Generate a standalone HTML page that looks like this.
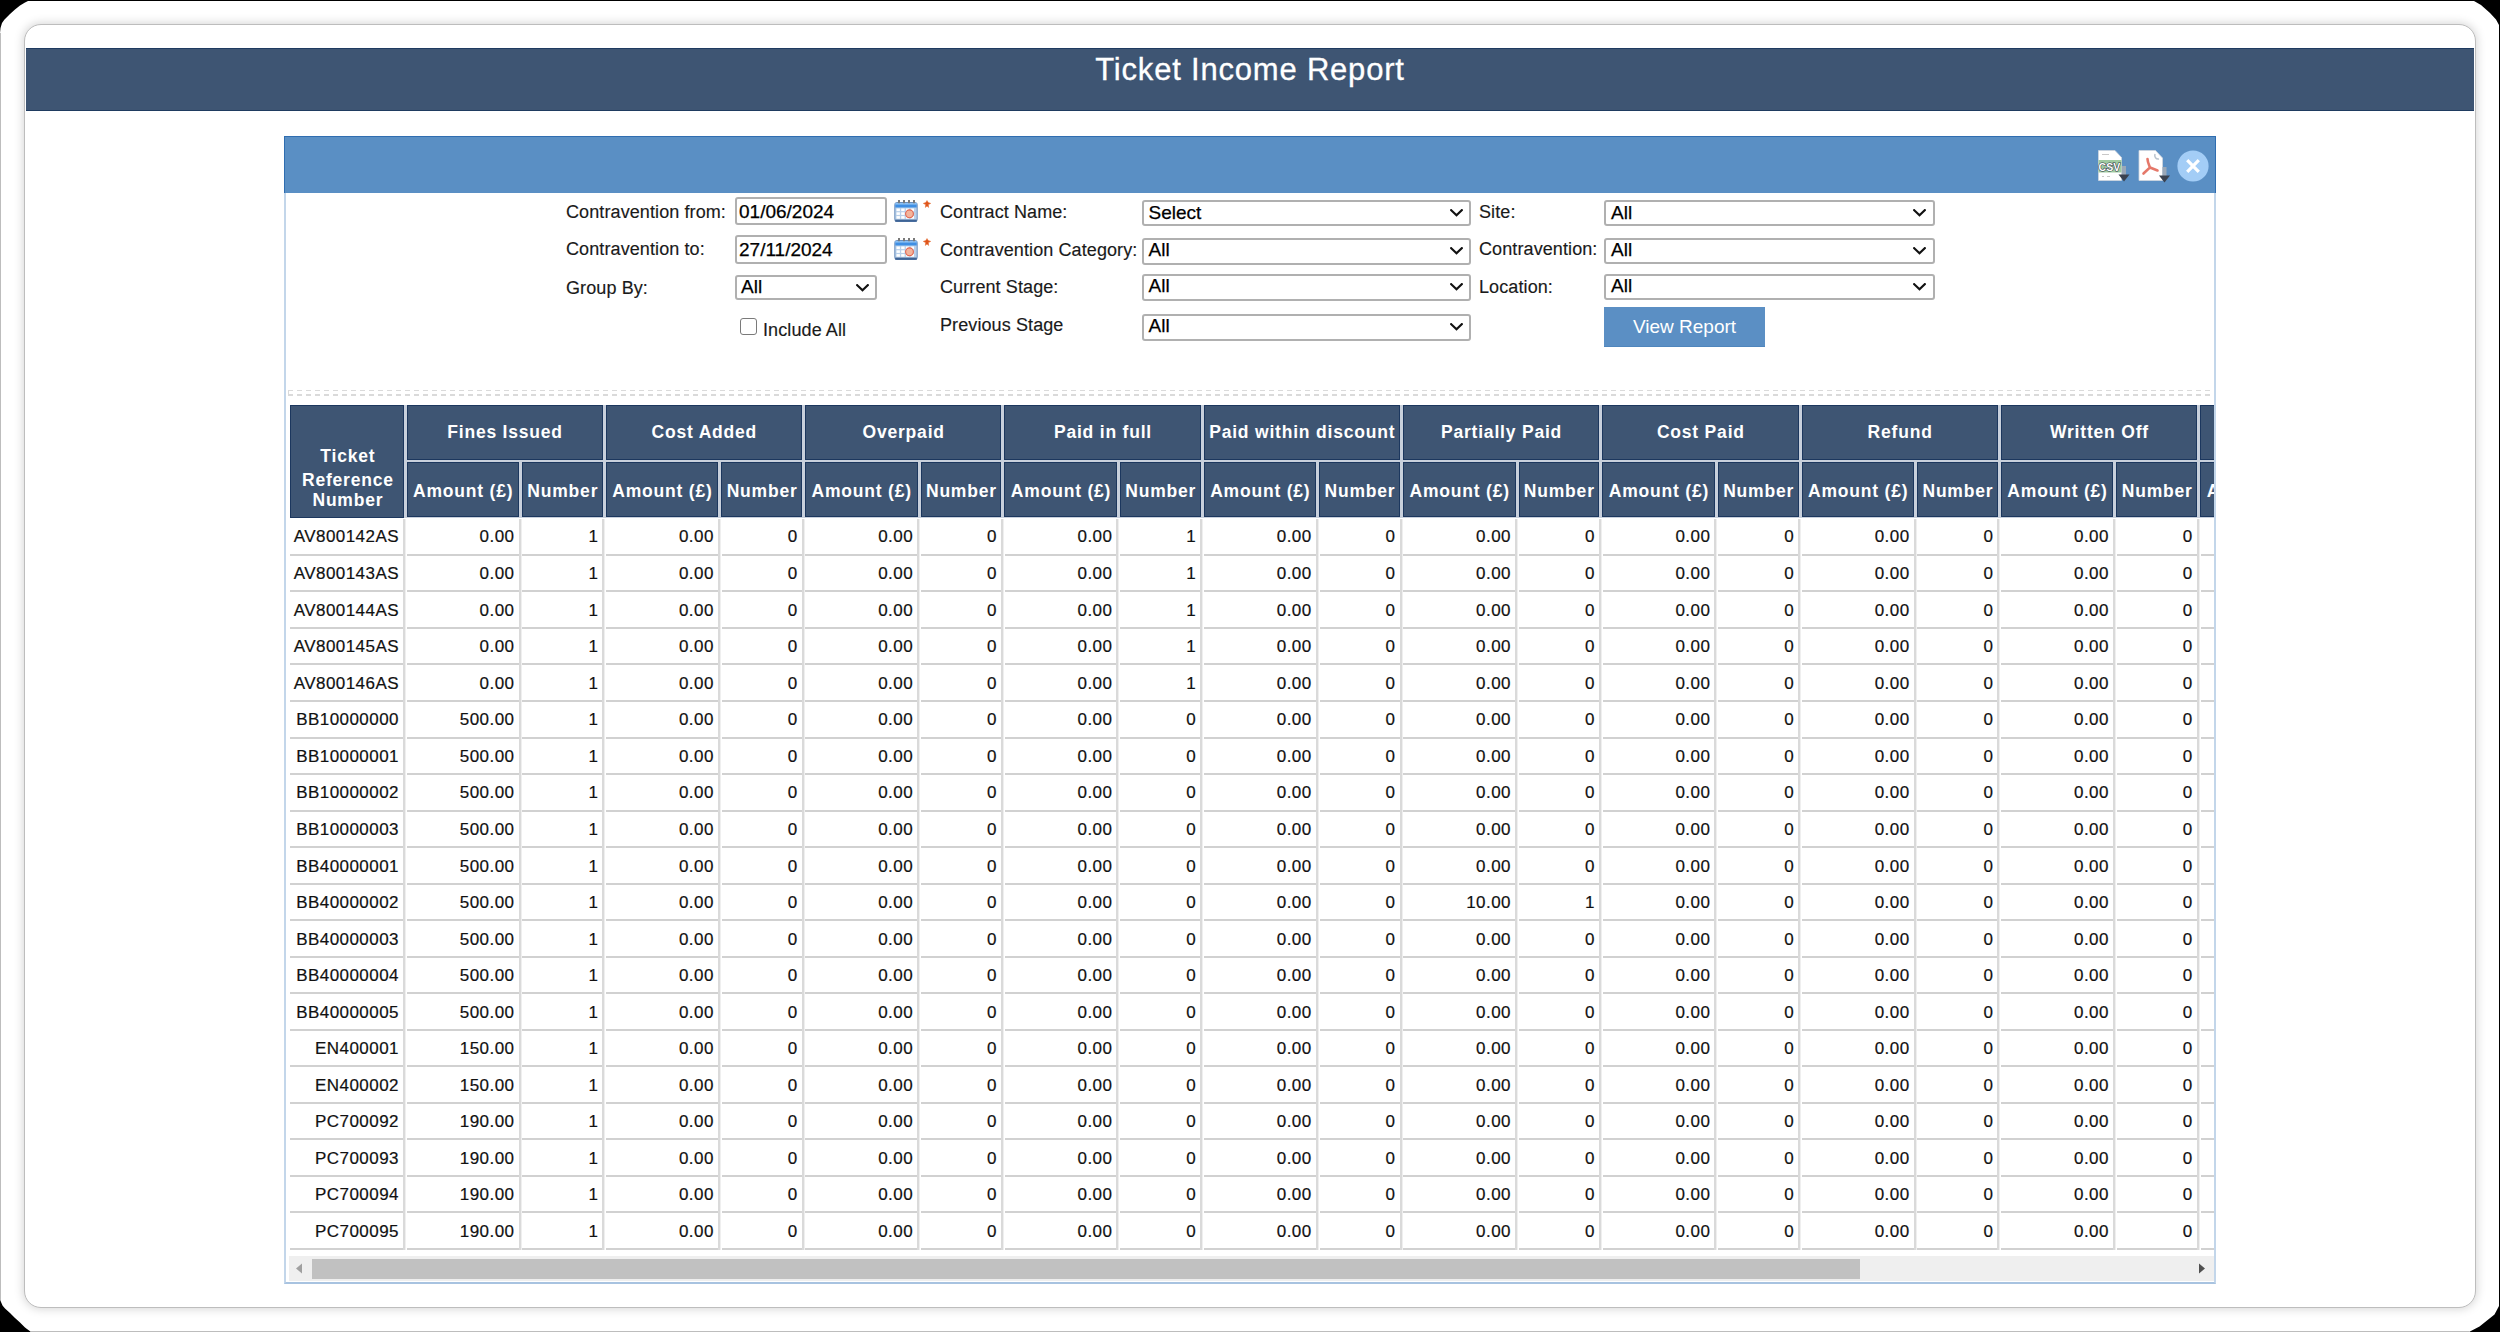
<!DOCTYPE html>
<html>
<head>
<meta charset="utf-8">
<style>

*{box-sizing:border-box;margin:0;padding:0}
html,body{width:2500px;height:1332px;overflow:hidden;background:#000}
body{font-family:"Liberation Sans",sans-serif;position:relative}
.outer{position:absolute;left:0;top:0;width:2500px;height:1332px;background:#fff;clip-path:polygon(0px 33px,0.5px 28px,2px 23px,4.5px 19.5px,10px 14px,15px 9.5px,20px 5.5px,25px 2.5px,28px 1px,2474px 1px,2481px 5px,2490px 13px,2496px 19.5px,2499px 25px,2499px 1306px,2494.5px 1314.5px,2487px 1320.5px,2479.5px 1326.5px,2469px 1332px,31px 1332px,25px 1327.5px,20px 1322.5px,15px 1318px,10px 1313px,5px 1308.5px,2.5px 1305.5px,1px 1302px,0px 1299.5px)}
.gl{position:absolute;left:0;top:33px;width:1px;height:1267px;background:#bdbdbd}
.gb{position:absolute;left:31px;top:1331px;width:2438px;height:1px;background:#bdbdbd}
.card{position:absolute;left:23.8px;top:23.6px;width:2452.6px;height:1284.6px;background:#fff;border:1.6px solid #bdbdbd;border-radius:17px;box-shadow:0 0 10px 1px rgba(0,0,0,0.17)}
.topbar{position:absolute;left:26px;top:48px;width:2448px;height:63px;background:#3e5573;border-top:1.5px solid #1f3b60;border-bottom:1.5px solid #1f3b60}
.title{position:absolute;left:0;top:0;width:100%;text-align:center;color:#fff;font-size:31px;line-height:42px;letter-spacing:0.8px;-webkit-text-stroke:0.3px #fff}
.panel{position:absolute;left:284px;top:136px;width:1932px;height:1148px;border:2px solid #c3d6ea;border-bottom-color:#a8c3e0;border-top:none;background:#fff;overflow:hidden}
.phead{position:absolute;left:284px;top:136px;width:1932px;height:57px;background:#5a8fc4;border-top:1.5px solid #2f6db0;border-right:1.5px solid #2f6db0;border-left:1.2px solid #2f6db0}
.lbl{position:absolute;font-size:18px;color:#111;white-space:nowrap;line-height:20px}
.inp{position:absolute;border:2px solid #8a8a8a;border-radius:3px;background:#fff;font-size:19px;color:#000;line-height:22px;padding-left:4px;white-space:nowrap}
.sel{position:absolute;border:2px solid #7d7d7d;border-radius:3px;background:#fff;font-size:19px;color:#000;line-height:22px;padding-left:5px;white-space:nowrap}
.sel svg{position:absolute;right:7px;top:8px}

.lbl{position:absolute;font-size:18px;color:#1a1a1a;white-space:nowrap;line-height:20px;letter-spacing:0.1px;-webkit-text-stroke:0.15px #1a1a1a}
.box{position:absolute;border:2px solid #b0b0b0;border-radius:3px;background:#fff;font-size:19px;color:#000;white-space:nowrap;overflow:hidden}
.box span{position:absolute;left:0;top:0;line-height:20px;-webkit-text-stroke:0.25px #000}
.chev{position:absolute;width:13px;height:8px}
.btn{position:absolute;left:1604px;top:307px;width:161px;height:40px;background:#5b8fc4;color:#fff;font-size:19px;text-align:center;line-height:40px;border-bottom:1px solid #4f86bd}
.cb{position:absolute;left:740px;top:318px;width:17px;height:17px;border:1.5px solid #7a7a7a;border-radius:3px;background:#fff}
.cal{position:absolute;width:24px;height:22px}
.ast{position:absolute;width:8px;height:8px}
.dash{position:absolute;left:288px;top:390.2px;width:1926px;height:5.6px;background:repeating-linear-gradient(90deg,#dadada 0,#dadada 5px,transparent 5px,transparent 9px);-webkit-mask:linear-gradient(180deg,#000 0,#000 1.4px,transparent 1.4px,transparent 4.2px,#000 4.2px,#000 5.6px)}
.dashl{position:absolute;left:288px;top:390.2px;width:1.4px;height:5.6px;background:#dadada}


.tclip{position:absolute;left:288px;top:400px;width:1926px;height:855px;overflow:hidden}
.hbg{position:absolute;background:#c8d0dc}
.hc{position:absolute;background:#3e5573;border:1.3px solid #1c375e}
.ht{position:absolute;width:300px;text-align:center;color:#fff;font-weight:bold;font-size:17.5px;line-height:22px;white-space:nowrap;letter-spacing:0.8px;text-indent:0.8px}
.hl{position:absolute;height:2px;background:#d1d1d1}
.vl{position:absolute;width:3px;background:linear-gradient(90deg,#dadada 0,#dadada 55%,#efefef 55%)}
.bt{position:absolute;width:200px;text-align:right;color:#111;font-size:17px;line-height:20px;white-space:nowrap;letter-spacing:0.45px;-webkit-text-stroke:0.2px #111}
.sbar{position:absolute;left:289px;top:1256px;width:1925px;height:25px;background:#efefef}
.sthumb{position:absolute;left:23px;top:2.5px;width:1548px;height:20.5px;background:#c1c1c1}

</style>
</head>
<body>
<div class="outer"></div><div class="gl"></div><div class="gb"></div>
<div class="card"></div>
<div class="topbar"><div class="title" style="top:0.4px">Ticket Income Report</div></div>
<div class="panel"></div>
<div class="phead"></div>
<svg style="position:absolute;left:2094px;top:146px" width="40" height="40" viewBox="0 0 40 40">
<path d="M4.5 4.5 H21 L27.5 11.5 V34.5 H4.5Z" fill="#fff" stroke="#cfd6de" stroke-width="0.8"/>
<path d="M8 8.5 H15 M8 30.5 H10 M13 30.5 H16" stroke="#c8c8c8" stroke-width="1.2"/>
<rect x="4.5" y="14" width="23" height="12.5" fill="#9fcaa0"/>
<text x="4.6" y="24.6" font-family="Liberation Sans" font-weight="bold" font-size="10.5" fill="#fff" stroke="#2a3344" stroke-width="1.1" paint-order="stroke">CSV</text>
<path d="M30 20 V33" stroke="#9aa8b8" stroke-width="4"/>
<path d="M24.5 28.5 L30 35.5 L35.5 28.5Z" fill="#3a4250"/>
</svg>
<svg style="position:absolute;left:2134px;top:146px" width="40" height="40" viewBox="0 0 40 40">
<path d="M5 4.5 H21.5 L28.5 12 V34.5 H5Z" fill="#fff" stroke="#cfd6de" stroke-width="0.8"/>
<path d="M21 8 C20 11 22 13.5 25 13" stroke="#b8c2cc" stroke-width="1.5" fill="none"/>
<path d="M13.5 13 C13.5 16 15 19 16 21.5 L9.5 27.5 M16 21.5 L23.5 24.5" stroke="#e5786a" stroke-width="2.6" fill="none" stroke-linecap="round"/>
<path d="M30.5 21 V34" stroke="#9aa8b8" stroke-width="4"/>
<path d="M25 29.5 L30.5 36.5 L36 29.5Z" fill="#3a4250"/>
</svg>
<svg style="position:absolute;left:2177px;top:150px" width="32" height="32" viewBox="0 0 32 32">
<circle cx="16" cy="16" r="15.6" fill="#a3cdf6"/>
<path d="M10.2 10.2 L21.8 21.8 M21.8 10.2 L10.2 21.8" stroke="#fff" stroke-width="3.2" stroke-linecap="butt"/>
</svg>
<div class="dash"></div><div class="dashl"></div><div class="lbl" style="left:566px;top:201.56px;">Contravention from:</div><div class="lbl" style="left:566px;top:239.36px;">Contravention to:</div><div class="lbl" style="left:566px;top:277.76px;">Group By:</div><div class="lbl" style="left:763px;top:320.26px;">Include All</div><div class="box" style="left:735px;top:197px;width:152px;height:28px"><span style="left:2px;top:3.02px">01/06/2024</span></div><div class="box" style="left:735px;top:235px;width:152px;height:29px"><span style="left:2px;top:3.02px">27/11/2024</span></div><div class="box" style="left:735px;top:275px;width:142px;height:25px"><span style="left:4px;top:-0.18px">All</span><svg class="chev" style="left:118.5px;top:6.5px" viewBox="0 0 13 8"><path d="M1.2 1.2 L6.5 6.3 L11.8 1.2" fill="none" stroke="#111" stroke-width="2.2" stroke-linecap="square"/></svg></div><div class="cb"></div><svg class="cal" style="left:894px;top:200px" viewBox="0 0 24 22">
<rect x="0.8" y="2.5" width="22.4" height="19" rx="2" fill="#b9d0ea" stroke="#6a8fbd" stroke-width="1"/>
<rect x="1.3" y="3" width="21.4" height="4.5" fill="#3f8fe4"/>
<rect x="1.3" y="3" width="21.4" height="1.6" fill="#8cc0f2"/>
<g fill="#7a7a7a"><rect x="4" y="0" width="2" height="3.2"/><rect x="9" y="0" width="2" height="3.2"/><rect x="14" y="0" width="2" height="3.2"/><rect x="19" y="0" width="2" height="3.2"/></g>
<g fill="#ffffff"><rect x="2.5" y="8.5" width="3.4" height="2.6"/><rect x="7.2" y="8.5" width="3.4" height="2.6"/><rect x="11.9" y="8.5" width="3.4" height="2.6"/><rect x="16.6" y="8.5" width="3.4" height="2.6"/>
<rect x="2.5" y="12.3" width="3.4" height="2.6"/><rect x="7.2" y="12.3" width="3.4" height="2.6"/><rect x="2.5" y="16.1" width="3.4" height="2.6"/><rect x="7.2" y="16.1" width="3.4" height="2.6"/><rect x="11.9" y="16.1" width="3.4" height="2.6"/><rect x="16.6" y="16.1" width="3.4" height="2.6"/></g>
<circle cx="15.5" cy="13.8" r="3.9" fill="#f3b49c" stroke="#e2654e" stroke-width="1.1"/>
<rect x="1.2" y="19.6" width="21.6" height="2.2" fill="#3f6496"/>
</svg><svg class="cal" style="left:894px;top:238px" viewBox="0 0 24 22">
<rect x="0.8" y="2.5" width="22.4" height="19" rx="2" fill="#b9d0ea" stroke="#6a8fbd" stroke-width="1"/>
<rect x="1.3" y="3" width="21.4" height="4.5" fill="#3f8fe4"/>
<rect x="1.3" y="3" width="21.4" height="1.6" fill="#8cc0f2"/>
<g fill="#7a7a7a"><rect x="4" y="0" width="2" height="3.2"/><rect x="9" y="0" width="2" height="3.2"/><rect x="14" y="0" width="2" height="3.2"/><rect x="19" y="0" width="2" height="3.2"/></g>
<g fill="#ffffff"><rect x="2.5" y="8.5" width="3.4" height="2.6"/><rect x="7.2" y="8.5" width="3.4" height="2.6"/><rect x="11.9" y="8.5" width="3.4" height="2.6"/><rect x="16.6" y="8.5" width="3.4" height="2.6"/>
<rect x="2.5" y="12.3" width="3.4" height="2.6"/><rect x="7.2" y="12.3" width="3.4" height="2.6"/><rect x="2.5" y="16.1" width="3.4" height="2.6"/><rect x="7.2" y="16.1" width="3.4" height="2.6"/><rect x="11.9" y="16.1" width="3.4" height="2.6"/><rect x="16.6" y="16.1" width="3.4" height="2.6"/></g>
<circle cx="15.5" cy="13.8" r="3.9" fill="#f3b49c" stroke="#e2654e" stroke-width="1.1"/>
<rect x="1.2" y="19.6" width="21.6" height="2.2" fill="#3f6496"/>
</svg><svg class="ast" style="left:923px;top:200px" viewBox="0 0 8 8"><path d="M4 0.6 L5.2 2.4 L7.7 3.4 L5.4 4.6 L5.6 7.4 L4 6.1 L2.4 7.4 L2.6 4.6 L0.3 3.4 L2.8 2.4Z" fill="#e0561c" stroke="#e8763e" stroke-width="0.6" stroke-linejoin="round"/></svg><svg class="ast" style="left:923px;top:238px" viewBox="0 0 8 8"><path d="M4 0.6 L5.2 2.4 L7.7 3.4 L5.4 4.6 L5.6 7.4 L4 6.1 L2.4 7.4 L2.6 4.6 L0.3 3.4 L2.8 2.4Z" fill="#e0561c" stroke="#e8763e" stroke-width="0.6" stroke-linejoin="round"/></svg><div class="lbl" style="left:940px;top:201.76px;">Contract Name:</div><div class="lbl" style="left:940px;top:239.76px;">Contravention Category:</div><div class="lbl" style="left:940px;top:276.76px;">Current Stage:</div><div class="lbl" style="left:940px;top:315.36px;">Previous Stage</div><div class="box" style="left:1142px;top:200px;width:329px;height:26px"><span style="left:4.5px;top:0.52px">Select</span><svg class="chev" style="left:305.5px;top:7px" viewBox="0 0 13 8"><path d="M1.2 1.2 L6.5 6.3 L11.8 1.2" fill="none" stroke="#111" stroke-width="2.2" stroke-linecap="square"/></svg></div><div class="box" style="left:1142px;top:238px;width:329px;height:26.5px"><span style="left:4.5px;top:0.42px">All</span><svg class="chev" style="left:305.5px;top:7px" viewBox="0 0 13 8"><path d="M1.2 1.2 L6.5 6.3 L11.8 1.2" fill="none" stroke="#111" stroke-width="2.2" stroke-linecap="square"/></svg></div><div class="box" style="left:1142px;top:274px;width:329px;height:26.5px"><span style="left:4.5px;top:0.42px">All</span><svg class="chev" style="left:305.5px;top:7px" viewBox="0 0 13 8"><path d="M1.2 1.2 L6.5 6.3 L11.8 1.2" fill="none" stroke="#111" stroke-width="2.2" stroke-linecap="square"/></svg></div><div class="box" style="left:1142px;top:314px;width:329px;height:27px"><span style="left:4.5px;top:0.42px">All</span><svg class="chev" style="left:305.5px;top:7px" viewBox="0 0 13 8"><path d="M1.2 1.2 L6.5 6.3 L11.8 1.2" fill="none" stroke="#111" stroke-width="2.2" stroke-linecap="square"/></svg></div><div class="lbl" style="left:1479px;top:201.76px;">Site:</div><div class="lbl" style="left:1479px;top:239.36px;">Contravention:</div><div class="lbl" style="left:1479px;top:276.76px;">Location:</div><div class="box" style="left:1604px;top:200px;width:331px;height:26px"><span style="left:5px;top:0.52px">All</span><svg class="chev" style="left:307px;top:7px" viewBox="0 0 13 8"><path d="M1.2 1.2 L6.5 6.3 L11.8 1.2" fill="none" stroke="#111" stroke-width="2.2" stroke-linecap="square"/></svg></div><div class="box" style="left:1604px;top:238px;width:331px;height:26px"><span style="left:5px;top:0.42px">All</span><svg class="chev" style="left:307px;top:7px" viewBox="0 0 13 8"><path d="M1.2 1.2 L6.5 6.3 L11.8 1.2" fill="none" stroke="#111" stroke-width="2.2" stroke-linecap="square"/></svg></div><div class="box" style="left:1604px;top:274px;width:331px;height:26px"><span style="left:5px;top:0.42px">All</span><svg class="chev" style="left:307px;top:7px" viewBox="0 0 13 8"><path d="M1.2 1.2 L6.5 6.3 L11.8 1.2" fill="none" stroke="#111" stroke-width="2.2" stroke-linecap="square"/></svg></div><div class="btn">View Report</div>
<div class="tclip">
<div class="hbg" style="left:2.00px;top:5.00px;width:2010.00px;height:112.50px"></div>
<div class="hc" style="left:2.00px;top:5.00px;width:113.50px;height:112.50px"></div>
<div class="hc" style="left:118.50px;top:5.00px;width:196.30px;height:54.50px"></div>
<div class="hc" style="left:118.50px;top:62.20px;width:112.50px;height:55.30px"></div>
<div class="hc" style="left:234.00px;top:62.20px;width:80.80px;height:55.30px"></div>
<div class="hc" style="left:317.80px;top:5.00px;width:196.30px;height:54.50px"></div>
<div class="hc" style="left:317.80px;top:62.20px;width:112.50px;height:55.30px"></div>
<div class="hc" style="left:433.30px;top:62.20px;width:80.80px;height:55.30px"></div>
<div class="hc" style="left:517.10px;top:5.00px;width:196.30px;height:54.50px"></div>
<div class="hc" style="left:517.10px;top:62.20px;width:112.50px;height:55.30px"></div>
<div class="hc" style="left:632.60px;top:62.20px;width:80.80px;height:55.30px"></div>
<div class="hc" style="left:716.40px;top:5.00px;width:196.30px;height:54.50px"></div>
<div class="hc" style="left:716.40px;top:62.20px;width:112.50px;height:55.30px"></div>
<div class="hc" style="left:831.90px;top:62.20px;width:80.80px;height:55.30px"></div>
<div class="hc" style="left:915.70px;top:5.00px;width:196.30px;height:54.50px"></div>
<div class="hc" style="left:915.70px;top:62.20px;width:112.50px;height:55.30px"></div>
<div class="hc" style="left:1031.20px;top:62.20px;width:80.80px;height:55.30px"></div>
<div class="hc" style="left:1115.00px;top:5.00px;width:196.30px;height:54.50px"></div>
<div class="hc" style="left:1115.00px;top:62.20px;width:112.50px;height:55.30px"></div>
<div class="hc" style="left:1230.50px;top:62.20px;width:80.80px;height:55.30px"></div>
<div class="hc" style="left:1314.30px;top:5.00px;width:196.30px;height:54.50px"></div>
<div class="hc" style="left:1314.30px;top:62.20px;width:112.50px;height:55.30px"></div>
<div class="hc" style="left:1429.80px;top:62.20px;width:80.80px;height:55.30px"></div>
<div class="hc" style="left:1513.60px;top:5.00px;width:196.30px;height:54.50px"></div>
<div class="hc" style="left:1513.60px;top:62.20px;width:112.50px;height:55.30px"></div>
<div class="hc" style="left:1629.10px;top:62.20px;width:80.80px;height:55.30px"></div>
<div class="hc" style="left:1712.90px;top:5.00px;width:196.30px;height:54.50px"></div>
<div class="hc" style="left:1712.90px;top:62.20px;width:112.50px;height:55.30px"></div>
<div class="hc" style="left:1828.40px;top:62.20px;width:80.80px;height:55.30px"></div>
<div class="hc" style="left:1912.20px;top:5.00px;width:196.30px;height:54.50px"></div>
<div class="hc" style="left:1912.20px;top:62.20px;width:112.50px;height:55.30px"></div>
<div class="hc" style="left:2027.70px;top:62.20px;width:80.80px;height:55.30px"></div>
<div class="ht" style="left:-90.50px;top:44.94px">Ticket</div>
<div class="ht" style="left:-90.50px;top:68.74px">Reference</div>
<div class="ht" style="left:-90.50px;top:89.24px">Number</div>
<div class="ht" style="left:66.65px;top:21.24px">Fines Issued</div>
<div class="ht" style="left:24.75px;top:79.54px">Amount (£)</div>
<div class="ht" style="left:124.40px;top:79.54px">Number</div>
<div class="ht" style="left:265.95px;top:21.24px">Cost Added</div>
<div class="ht" style="left:224.05px;top:79.54px">Amount (£)</div>
<div class="ht" style="left:323.70px;top:79.54px">Number</div>
<div class="ht" style="left:465.25px;top:21.24px">Overpaid</div>
<div class="ht" style="left:423.35px;top:79.54px">Amount (£)</div>
<div class="ht" style="left:523.00px;top:79.54px">Number</div>
<div class="ht" style="left:664.55px;top:21.24px">Paid in full</div>
<div class="ht" style="left:622.65px;top:79.54px">Amount (£)</div>
<div class="ht" style="left:722.30px;top:79.54px">Number</div>
<div class="ht" style="left:863.85px;top:21.24px">Paid within discount</div>
<div class="ht" style="left:821.95px;top:79.54px">Amount (£)</div>
<div class="ht" style="left:921.60px;top:79.54px">Number</div>
<div class="ht" style="left:1063.15px;top:21.24px">Partially Paid</div>
<div class="ht" style="left:1021.25px;top:79.54px">Amount (£)</div>
<div class="ht" style="left:1120.90px;top:79.54px">Number</div>
<div class="ht" style="left:1262.45px;top:21.24px">Cost Paid</div>
<div class="ht" style="left:1220.55px;top:79.54px">Amount (£)</div>
<div class="ht" style="left:1320.20px;top:79.54px">Number</div>
<div class="ht" style="left:1461.75px;top:21.24px">Refund</div>
<div class="ht" style="left:1419.85px;top:79.54px">Amount (£)</div>
<div class="ht" style="left:1519.50px;top:79.54px">Number</div>
<div class="ht" style="left:1661.05px;top:21.24px">Written Off</div>
<div class="ht" style="left:1619.15px;top:79.54px">Amount (£)</div>
<div class="ht" style="left:1718.80px;top:79.54px">Number</div>
<div class="ht" style="left:1860.35px;top:21.24px">Balance</div>
<div class="ht" style="left:1818.45px;top:79.54px">Amount (£)</div>
<div class="ht" style="left:1918.10px;top:79.54px">Number</div>
<div class="hl" style="left:2.00px;top:153.90px;width:113.20px"></div>
<div class="hl" style="left:118.80px;top:153.90px;width:111.90px"></div>
<div class="hl" style="left:234.30px;top:153.90px;width:80.20px"></div>
<div class="hl" style="left:318.10px;top:153.90px;width:111.90px"></div>
<div class="hl" style="left:433.60px;top:153.90px;width:80.20px"></div>
<div class="hl" style="left:517.40px;top:153.90px;width:111.90px"></div>
<div class="hl" style="left:632.90px;top:153.90px;width:80.20px"></div>
<div class="hl" style="left:716.70px;top:153.90px;width:111.90px"></div>
<div class="hl" style="left:832.20px;top:153.90px;width:80.20px"></div>
<div class="hl" style="left:916.00px;top:153.90px;width:111.90px"></div>
<div class="hl" style="left:1031.50px;top:153.90px;width:80.20px"></div>
<div class="hl" style="left:1115.30px;top:153.90px;width:111.90px"></div>
<div class="hl" style="left:1230.80px;top:153.90px;width:80.20px"></div>
<div class="hl" style="left:1314.60px;top:153.90px;width:111.90px"></div>
<div class="hl" style="left:1430.10px;top:153.90px;width:80.20px"></div>
<div class="hl" style="left:1513.90px;top:153.90px;width:111.90px"></div>
<div class="hl" style="left:1629.40px;top:153.90px;width:80.20px"></div>
<div class="hl" style="left:1713.20px;top:153.90px;width:111.90px"></div>
<div class="hl" style="left:1828.70px;top:153.90px;width:80.20px"></div>
<div class="hl" style="left:1912.50px;top:153.90px;width:111.90px"></div>
<div class="hl" style="left:2028.00px;top:153.90px;width:80.20px"></div>
<div class="hl" style="left:2111.80px;top:153.90px;width:-100.60px"></div>
<div class="hl" style="left:2.00px;top:190.42px;width:113.20px"></div>
<div class="hl" style="left:118.80px;top:190.42px;width:111.90px"></div>
<div class="hl" style="left:234.30px;top:190.42px;width:80.20px"></div>
<div class="hl" style="left:318.10px;top:190.42px;width:111.90px"></div>
<div class="hl" style="left:433.60px;top:190.42px;width:80.20px"></div>
<div class="hl" style="left:517.40px;top:190.42px;width:111.90px"></div>
<div class="hl" style="left:632.90px;top:190.42px;width:80.20px"></div>
<div class="hl" style="left:716.70px;top:190.42px;width:111.90px"></div>
<div class="hl" style="left:832.20px;top:190.42px;width:80.20px"></div>
<div class="hl" style="left:916.00px;top:190.42px;width:111.90px"></div>
<div class="hl" style="left:1031.50px;top:190.42px;width:80.20px"></div>
<div class="hl" style="left:1115.30px;top:190.42px;width:111.90px"></div>
<div class="hl" style="left:1230.80px;top:190.42px;width:80.20px"></div>
<div class="hl" style="left:1314.60px;top:190.42px;width:111.90px"></div>
<div class="hl" style="left:1430.10px;top:190.42px;width:80.20px"></div>
<div class="hl" style="left:1513.90px;top:190.42px;width:111.90px"></div>
<div class="hl" style="left:1629.40px;top:190.42px;width:80.20px"></div>
<div class="hl" style="left:1713.20px;top:190.42px;width:111.90px"></div>
<div class="hl" style="left:1828.70px;top:190.42px;width:80.20px"></div>
<div class="hl" style="left:1912.50px;top:190.42px;width:111.90px"></div>
<div class="hl" style="left:2028.00px;top:190.42px;width:80.20px"></div>
<div class="hl" style="left:2111.80px;top:190.42px;width:-100.60px"></div>
<div class="hl" style="left:2.00px;top:226.94px;width:113.20px"></div>
<div class="hl" style="left:118.80px;top:226.94px;width:111.90px"></div>
<div class="hl" style="left:234.30px;top:226.94px;width:80.20px"></div>
<div class="hl" style="left:318.10px;top:226.94px;width:111.90px"></div>
<div class="hl" style="left:433.60px;top:226.94px;width:80.20px"></div>
<div class="hl" style="left:517.40px;top:226.94px;width:111.90px"></div>
<div class="hl" style="left:632.90px;top:226.94px;width:80.20px"></div>
<div class="hl" style="left:716.70px;top:226.94px;width:111.90px"></div>
<div class="hl" style="left:832.20px;top:226.94px;width:80.20px"></div>
<div class="hl" style="left:916.00px;top:226.94px;width:111.90px"></div>
<div class="hl" style="left:1031.50px;top:226.94px;width:80.20px"></div>
<div class="hl" style="left:1115.30px;top:226.94px;width:111.90px"></div>
<div class="hl" style="left:1230.80px;top:226.94px;width:80.20px"></div>
<div class="hl" style="left:1314.60px;top:226.94px;width:111.90px"></div>
<div class="hl" style="left:1430.10px;top:226.94px;width:80.20px"></div>
<div class="hl" style="left:1513.90px;top:226.94px;width:111.90px"></div>
<div class="hl" style="left:1629.40px;top:226.94px;width:80.20px"></div>
<div class="hl" style="left:1713.20px;top:226.94px;width:111.90px"></div>
<div class="hl" style="left:1828.70px;top:226.94px;width:80.20px"></div>
<div class="hl" style="left:1912.50px;top:226.94px;width:111.90px"></div>
<div class="hl" style="left:2028.00px;top:226.94px;width:80.20px"></div>
<div class="hl" style="left:2111.80px;top:226.94px;width:-100.60px"></div>
<div class="hl" style="left:2.00px;top:263.46px;width:113.20px"></div>
<div class="hl" style="left:118.80px;top:263.46px;width:111.90px"></div>
<div class="hl" style="left:234.30px;top:263.46px;width:80.20px"></div>
<div class="hl" style="left:318.10px;top:263.46px;width:111.90px"></div>
<div class="hl" style="left:433.60px;top:263.46px;width:80.20px"></div>
<div class="hl" style="left:517.40px;top:263.46px;width:111.90px"></div>
<div class="hl" style="left:632.90px;top:263.46px;width:80.20px"></div>
<div class="hl" style="left:716.70px;top:263.46px;width:111.90px"></div>
<div class="hl" style="left:832.20px;top:263.46px;width:80.20px"></div>
<div class="hl" style="left:916.00px;top:263.46px;width:111.90px"></div>
<div class="hl" style="left:1031.50px;top:263.46px;width:80.20px"></div>
<div class="hl" style="left:1115.30px;top:263.46px;width:111.90px"></div>
<div class="hl" style="left:1230.80px;top:263.46px;width:80.20px"></div>
<div class="hl" style="left:1314.60px;top:263.46px;width:111.90px"></div>
<div class="hl" style="left:1430.10px;top:263.46px;width:80.20px"></div>
<div class="hl" style="left:1513.90px;top:263.46px;width:111.90px"></div>
<div class="hl" style="left:1629.40px;top:263.46px;width:80.20px"></div>
<div class="hl" style="left:1713.20px;top:263.46px;width:111.90px"></div>
<div class="hl" style="left:1828.70px;top:263.46px;width:80.20px"></div>
<div class="hl" style="left:1912.50px;top:263.46px;width:111.90px"></div>
<div class="hl" style="left:2028.00px;top:263.46px;width:80.20px"></div>
<div class="hl" style="left:2111.80px;top:263.46px;width:-100.60px"></div>
<div class="hl" style="left:2.00px;top:299.98px;width:113.20px"></div>
<div class="hl" style="left:118.80px;top:299.98px;width:111.90px"></div>
<div class="hl" style="left:234.30px;top:299.98px;width:80.20px"></div>
<div class="hl" style="left:318.10px;top:299.98px;width:111.90px"></div>
<div class="hl" style="left:433.60px;top:299.98px;width:80.20px"></div>
<div class="hl" style="left:517.40px;top:299.98px;width:111.90px"></div>
<div class="hl" style="left:632.90px;top:299.98px;width:80.20px"></div>
<div class="hl" style="left:716.70px;top:299.98px;width:111.90px"></div>
<div class="hl" style="left:832.20px;top:299.98px;width:80.20px"></div>
<div class="hl" style="left:916.00px;top:299.98px;width:111.90px"></div>
<div class="hl" style="left:1031.50px;top:299.98px;width:80.20px"></div>
<div class="hl" style="left:1115.30px;top:299.98px;width:111.90px"></div>
<div class="hl" style="left:1230.80px;top:299.98px;width:80.20px"></div>
<div class="hl" style="left:1314.60px;top:299.98px;width:111.90px"></div>
<div class="hl" style="left:1430.10px;top:299.98px;width:80.20px"></div>
<div class="hl" style="left:1513.90px;top:299.98px;width:111.90px"></div>
<div class="hl" style="left:1629.40px;top:299.98px;width:80.20px"></div>
<div class="hl" style="left:1713.20px;top:299.98px;width:111.90px"></div>
<div class="hl" style="left:1828.70px;top:299.98px;width:80.20px"></div>
<div class="hl" style="left:1912.50px;top:299.98px;width:111.90px"></div>
<div class="hl" style="left:2028.00px;top:299.98px;width:80.20px"></div>
<div class="hl" style="left:2111.80px;top:299.98px;width:-100.60px"></div>
<div class="hl" style="left:2.00px;top:336.50px;width:113.20px"></div>
<div class="hl" style="left:118.80px;top:336.50px;width:111.90px"></div>
<div class="hl" style="left:234.30px;top:336.50px;width:80.20px"></div>
<div class="hl" style="left:318.10px;top:336.50px;width:111.90px"></div>
<div class="hl" style="left:433.60px;top:336.50px;width:80.20px"></div>
<div class="hl" style="left:517.40px;top:336.50px;width:111.90px"></div>
<div class="hl" style="left:632.90px;top:336.50px;width:80.20px"></div>
<div class="hl" style="left:716.70px;top:336.50px;width:111.90px"></div>
<div class="hl" style="left:832.20px;top:336.50px;width:80.20px"></div>
<div class="hl" style="left:916.00px;top:336.50px;width:111.90px"></div>
<div class="hl" style="left:1031.50px;top:336.50px;width:80.20px"></div>
<div class="hl" style="left:1115.30px;top:336.50px;width:111.90px"></div>
<div class="hl" style="left:1230.80px;top:336.50px;width:80.20px"></div>
<div class="hl" style="left:1314.60px;top:336.50px;width:111.90px"></div>
<div class="hl" style="left:1430.10px;top:336.50px;width:80.20px"></div>
<div class="hl" style="left:1513.90px;top:336.50px;width:111.90px"></div>
<div class="hl" style="left:1629.40px;top:336.50px;width:80.20px"></div>
<div class="hl" style="left:1713.20px;top:336.50px;width:111.90px"></div>
<div class="hl" style="left:1828.70px;top:336.50px;width:80.20px"></div>
<div class="hl" style="left:1912.50px;top:336.50px;width:111.90px"></div>
<div class="hl" style="left:2028.00px;top:336.50px;width:80.20px"></div>
<div class="hl" style="left:2111.80px;top:336.50px;width:-100.60px"></div>
<div class="hl" style="left:2.00px;top:373.02px;width:113.20px"></div>
<div class="hl" style="left:118.80px;top:373.02px;width:111.90px"></div>
<div class="hl" style="left:234.30px;top:373.02px;width:80.20px"></div>
<div class="hl" style="left:318.10px;top:373.02px;width:111.90px"></div>
<div class="hl" style="left:433.60px;top:373.02px;width:80.20px"></div>
<div class="hl" style="left:517.40px;top:373.02px;width:111.90px"></div>
<div class="hl" style="left:632.90px;top:373.02px;width:80.20px"></div>
<div class="hl" style="left:716.70px;top:373.02px;width:111.90px"></div>
<div class="hl" style="left:832.20px;top:373.02px;width:80.20px"></div>
<div class="hl" style="left:916.00px;top:373.02px;width:111.90px"></div>
<div class="hl" style="left:1031.50px;top:373.02px;width:80.20px"></div>
<div class="hl" style="left:1115.30px;top:373.02px;width:111.90px"></div>
<div class="hl" style="left:1230.80px;top:373.02px;width:80.20px"></div>
<div class="hl" style="left:1314.60px;top:373.02px;width:111.90px"></div>
<div class="hl" style="left:1430.10px;top:373.02px;width:80.20px"></div>
<div class="hl" style="left:1513.90px;top:373.02px;width:111.90px"></div>
<div class="hl" style="left:1629.40px;top:373.02px;width:80.20px"></div>
<div class="hl" style="left:1713.20px;top:373.02px;width:111.90px"></div>
<div class="hl" style="left:1828.70px;top:373.02px;width:80.20px"></div>
<div class="hl" style="left:1912.50px;top:373.02px;width:111.90px"></div>
<div class="hl" style="left:2028.00px;top:373.02px;width:80.20px"></div>
<div class="hl" style="left:2111.80px;top:373.02px;width:-100.60px"></div>
<div class="hl" style="left:2.00px;top:409.54px;width:113.20px"></div>
<div class="hl" style="left:118.80px;top:409.54px;width:111.90px"></div>
<div class="hl" style="left:234.30px;top:409.54px;width:80.20px"></div>
<div class="hl" style="left:318.10px;top:409.54px;width:111.90px"></div>
<div class="hl" style="left:433.60px;top:409.54px;width:80.20px"></div>
<div class="hl" style="left:517.40px;top:409.54px;width:111.90px"></div>
<div class="hl" style="left:632.90px;top:409.54px;width:80.20px"></div>
<div class="hl" style="left:716.70px;top:409.54px;width:111.90px"></div>
<div class="hl" style="left:832.20px;top:409.54px;width:80.20px"></div>
<div class="hl" style="left:916.00px;top:409.54px;width:111.90px"></div>
<div class="hl" style="left:1031.50px;top:409.54px;width:80.20px"></div>
<div class="hl" style="left:1115.30px;top:409.54px;width:111.90px"></div>
<div class="hl" style="left:1230.80px;top:409.54px;width:80.20px"></div>
<div class="hl" style="left:1314.60px;top:409.54px;width:111.90px"></div>
<div class="hl" style="left:1430.10px;top:409.54px;width:80.20px"></div>
<div class="hl" style="left:1513.90px;top:409.54px;width:111.90px"></div>
<div class="hl" style="left:1629.40px;top:409.54px;width:80.20px"></div>
<div class="hl" style="left:1713.20px;top:409.54px;width:111.90px"></div>
<div class="hl" style="left:1828.70px;top:409.54px;width:80.20px"></div>
<div class="hl" style="left:1912.50px;top:409.54px;width:111.90px"></div>
<div class="hl" style="left:2028.00px;top:409.54px;width:80.20px"></div>
<div class="hl" style="left:2111.80px;top:409.54px;width:-100.60px"></div>
<div class="hl" style="left:2.00px;top:446.06px;width:113.20px"></div>
<div class="hl" style="left:118.80px;top:446.06px;width:111.90px"></div>
<div class="hl" style="left:234.30px;top:446.06px;width:80.20px"></div>
<div class="hl" style="left:318.10px;top:446.06px;width:111.90px"></div>
<div class="hl" style="left:433.60px;top:446.06px;width:80.20px"></div>
<div class="hl" style="left:517.40px;top:446.06px;width:111.90px"></div>
<div class="hl" style="left:632.90px;top:446.06px;width:80.20px"></div>
<div class="hl" style="left:716.70px;top:446.06px;width:111.90px"></div>
<div class="hl" style="left:832.20px;top:446.06px;width:80.20px"></div>
<div class="hl" style="left:916.00px;top:446.06px;width:111.90px"></div>
<div class="hl" style="left:1031.50px;top:446.06px;width:80.20px"></div>
<div class="hl" style="left:1115.30px;top:446.06px;width:111.90px"></div>
<div class="hl" style="left:1230.80px;top:446.06px;width:80.20px"></div>
<div class="hl" style="left:1314.60px;top:446.06px;width:111.90px"></div>
<div class="hl" style="left:1430.10px;top:446.06px;width:80.20px"></div>
<div class="hl" style="left:1513.90px;top:446.06px;width:111.90px"></div>
<div class="hl" style="left:1629.40px;top:446.06px;width:80.20px"></div>
<div class="hl" style="left:1713.20px;top:446.06px;width:111.90px"></div>
<div class="hl" style="left:1828.70px;top:446.06px;width:80.20px"></div>
<div class="hl" style="left:1912.50px;top:446.06px;width:111.90px"></div>
<div class="hl" style="left:2028.00px;top:446.06px;width:80.20px"></div>
<div class="hl" style="left:2111.80px;top:446.06px;width:-100.60px"></div>
<div class="hl" style="left:2.00px;top:482.58px;width:113.20px"></div>
<div class="hl" style="left:118.80px;top:482.58px;width:111.90px"></div>
<div class="hl" style="left:234.30px;top:482.58px;width:80.20px"></div>
<div class="hl" style="left:318.10px;top:482.58px;width:111.90px"></div>
<div class="hl" style="left:433.60px;top:482.58px;width:80.20px"></div>
<div class="hl" style="left:517.40px;top:482.58px;width:111.90px"></div>
<div class="hl" style="left:632.90px;top:482.58px;width:80.20px"></div>
<div class="hl" style="left:716.70px;top:482.58px;width:111.90px"></div>
<div class="hl" style="left:832.20px;top:482.58px;width:80.20px"></div>
<div class="hl" style="left:916.00px;top:482.58px;width:111.90px"></div>
<div class="hl" style="left:1031.50px;top:482.58px;width:80.20px"></div>
<div class="hl" style="left:1115.30px;top:482.58px;width:111.90px"></div>
<div class="hl" style="left:1230.80px;top:482.58px;width:80.20px"></div>
<div class="hl" style="left:1314.60px;top:482.58px;width:111.90px"></div>
<div class="hl" style="left:1430.10px;top:482.58px;width:80.20px"></div>
<div class="hl" style="left:1513.90px;top:482.58px;width:111.90px"></div>
<div class="hl" style="left:1629.40px;top:482.58px;width:80.20px"></div>
<div class="hl" style="left:1713.20px;top:482.58px;width:111.90px"></div>
<div class="hl" style="left:1828.70px;top:482.58px;width:80.20px"></div>
<div class="hl" style="left:1912.50px;top:482.58px;width:111.90px"></div>
<div class="hl" style="left:2028.00px;top:482.58px;width:80.20px"></div>
<div class="hl" style="left:2111.80px;top:482.58px;width:-100.60px"></div>
<div class="hl" style="left:2.00px;top:519.10px;width:113.20px"></div>
<div class="hl" style="left:118.80px;top:519.10px;width:111.90px"></div>
<div class="hl" style="left:234.30px;top:519.10px;width:80.20px"></div>
<div class="hl" style="left:318.10px;top:519.10px;width:111.90px"></div>
<div class="hl" style="left:433.60px;top:519.10px;width:80.20px"></div>
<div class="hl" style="left:517.40px;top:519.10px;width:111.90px"></div>
<div class="hl" style="left:632.90px;top:519.10px;width:80.20px"></div>
<div class="hl" style="left:716.70px;top:519.10px;width:111.90px"></div>
<div class="hl" style="left:832.20px;top:519.10px;width:80.20px"></div>
<div class="hl" style="left:916.00px;top:519.10px;width:111.90px"></div>
<div class="hl" style="left:1031.50px;top:519.10px;width:80.20px"></div>
<div class="hl" style="left:1115.30px;top:519.10px;width:111.90px"></div>
<div class="hl" style="left:1230.80px;top:519.10px;width:80.20px"></div>
<div class="hl" style="left:1314.60px;top:519.10px;width:111.90px"></div>
<div class="hl" style="left:1430.10px;top:519.10px;width:80.20px"></div>
<div class="hl" style="left:1513.90px;top:519.10px;width:111.90px"></div>
<div class="hl" style="left:1629.40px;top:519.10px;width:80.20px"></div>
<div class="hl" style="left:1713.20px;top:519.10px;width:111.90px"></div>
<div class="hl" style="left:1828.70px;top:519.10px;width:80.20px"></div>
<div class="hl" style="left:1912.50px;top:519.10px;width:111.90px"></div>
<div class="hl" style="left:2028.00px;top:519.10px;width:80.20px"></div>
<div class="hl" style="left:2111.80px;top:519.10px;width:-100.60px"></div>
<div class="hl" style="left:2.00px;top:555.62px;width:113.20px"></div>
<div class="hl" style="left:118.80px;top:555.62px;width:111.90px"></div>
<div class="hl" style="left:234.30px;top:555.62px;width:80.20px"></div>
<div class="hl" style="left:318.10px;top:555.62px;width:111.90px"></div>
<div class="hl" style="left:433.60px;top:555.62px;width:80.20px"></div>
<div class="hl" style="left:517.40px;top:555.62px;width:111.90px"></div>
<div class="hl" style="left:632.90px;top:555.62px;width:80.20px"></div>
<div class="hl" style="left:716.70px;top:555.62px;width:111.90px"></div>
<div class="hl" style="left:832.20px;top:555.62px;width:80.20px"></div>
<div class="hl" style="left:916.00px;top:555.62px;width:111.90px"></div>
<div class="hl" style="left:1031.50px;top:555.62px;width:80.20px"></div>
<div class="hl" style="left:1115.30px;top:555.62px;width:111.90px"></div>
<div class="hl" style="left:1230.80px;top:555.62px;width:80.20px"></div>
<div class="hl" style="left:1314.60px;top:555.62px;width:111.90px"></div>
<div class="hl" style="left:1430.10px;top:555.62px;width:80.20px"></div>
<div class="hl" style="left:1513.90px;top:555.62px;width:111.90px"></div>
<div class="hl" style="left:1629.40px;top:555.62px;width:80.20px"></div>
<div class="hl" style="left:1713.20px;top:555.62px;width:111.90px"></div>
<div class="hl" style="left:1828.70px;top:555.62px;width:80.20px"></div>
<div class="hl" style="left:1912.50px;top:555.62px;width:111.90px"></div>
<div class="hl" style="left:2028.00px;top:555.62px;width:80.20px"></div>
<div class="hl" style="left:2111.80px;top:555.62px;width:-100.60px"></div>
<div class="hl" style="left:2.00px;top:592.14px;width:113.20px"></div>
<div class="hl" style="left:118.80px;top:592.14px;width:111.90px"></div>
<div class="hl" style="left:234.30px;top:592.14px;width:80.20px"></div>
<div class="hl" style="left:318.10px;top:592.14px;width:111.90px"></div>
<div class="hl" style="left:433.60px;top:592.14px;width:80.20px"></div>
<div class="hl" style="left:517.40px;top:592.14px;width:111.90px"></div>
<div class="hl" style="left:632.90px;top:592.14px;width:80.20px"></div>
<div class="hl" style="left:716.70px;top:592.14px;width:111.90px"></div>
<div class="hl" style="left:832.20px;top:592.14px;width:80.20px"></div>
<div class="hl" style="left:916.00px;top:592.14px;width:111.90px"></div>
<div class="hl" style="left:1031.50px;top:592.14px;width:80.20px"></div>
<div class="hl" style="left:1115.30px;top:592.14px;width:111.90px"></div>
<div class="hl" style="left:1230.80px;top:592.14px;width:80.20px"></div>
<div class="hl" style="left:1314.60px;top:592.14px;width:111.90px"></div>
<div class="hl" style="left:1430.10px;top:592.14px;width:80.20px"></div>
<div class="hl" style="left:1513.90px;top:592.14px;width:111.90px"></div>
<div class="hl" style="left:1629.40px;top:592.14px;width:80.20px"></div>
<div class="hl" style="left:1713.20px;top:592.14px;width:111.90px"></div>
<div class="hl" style="left:1828.70px;top:592.14px;width:80.20px"></div>
<div class="hl" style="left:1912.50px;top:592.14px;width:111.90px"></div>
<div class="hl" style="left:2028.00px;top:592.14px;width:80.20px"></div>
<div class="hl" style="left:2111.80px;top:592.14px;width:-100.60px"></div>
<div class="hl" style="left:2.00px;top:628.66px;width:113.20px"></div>
<div class="hl" style="left:118.80px;top:628.66px;width:111.90px"></div>
<div class="hl" style="left:234.30px;top:628.66px;width:80.20px"></div>
<div class="hl" style="left:318.10px;top:628.66px;width:111.90px"></div>
<div class="hl" style="left:433.60px;top:628.66px;width:80.20px"></div>
<div class="hl" style="left:517.40px;top:628.66px;width:111.90px"></div>
<div class="hl" style="left:632.90px;top:628.66px;width:80.20px"></div>
<div class="hl" style="left:716.70px;top:628.66px;width:111.90px"></div>
<div class="hl" style="left:832.20px;top:628.66px;width:80.20px"></div>
<div class="hl" style="left:916.00px;top:628.66px;width:111.90px"></div>
<div class="hl" style="left:1031.50px;top:628.66px;width:80.20px"></div>
<div class="hl" style="left:1115.30px;top:628.66px;width:111.90px"></div>
<div class="hl" style="left:1230.80px;top:628.66px;width:80.20px"></div>
<div class="hl" style="left:1314.60px;top:628.66px;width:111.90px"></div>
<div class="hl" style="left:1430.10px;top:628.66px;width:80.20px"></div>
<div class="hl" style="left:1513.90px;top:628.66px;width:111.90px"></div>
<div class="hl" style="left:1629.40px;top:628.66px;width:80.20px"></div>
<div class="hl" style="left:1713.20px;top:628.66px;width:111.90px"></div>
<div class="hl" style="left:1828.70px;top:628.66px;width:80.20px"></div>
<div class="hl" style="left:1912.50px;top:628.66px;width:111.90px"></div>
<div class="hl" style="left:2028.00px;top:628.66px;width:80.20px"></div>
<div class="hl" style="left:2111.80px;top:628.66px;width:-100.60px"></div>
<div class="hl" style="left:2.00px;top:665.18px;width:113.20px"></div>
<div class="hl" style="left:118.80px;top:665.18px;width:111.90px"></div>
<div class="hl" style="left:234.30px;top:665.18px;width:80.20px"></div>
<div class="hl" style="left:318.10px;top:665.18px;width:111.90px"></div>
<div class="hl" style="left:433.60px;top:665.18px;width:80.20px"></div>
<div class="hl" style="left:517.40px;top:665.18px;width:111.90px"></div>
<div class="hl" style="left:632.90px;top:665.18px;width:80.20px"></div>
<div class="hl" style="left:716.70px;top:665.18px;width:111.90px"></div>
<div class="hl" style="left:832.20px;top:665.18px;width:80.20px"></div>
<div class="hl" style="left:916.00px;top:665.18px;width:111.90px"></div>
<div class="hl" style="left:1031.50px;top:665.18px;width:80.20px"></div>
<div class="hl" style="left:1115.30px;top:665.18px;width:111.90px"></div>
<div class="hl" style="left:1230.80px;top:665.18px;width:80.20px"></div>
<div class="hl" style="left:1314.60px;top:665.18px;width:111.90px"></div>
<div class="hl" style="left:1430.10px;top:665.18px;width:80.20px"></div>
<div class="hl" style="left:1513.90px;top:665.18px;width:111.90px"></div>
<div class="hl" style="left:1629.40px;top:665.18px;width:80.20px"></div>
<div class="hl" style="left:1713.20px;top:665.18px;width:111.90px"></div>
<div class="hl" style="left:1828.70px;top:665.18px;width:80.20px"></div>
<div class="hl" style="left:1912.50px;top:665.18px;width:111.90px"></div>
<div class="hl" style="left:2028.00px;top:665.18px;width:80.20px"></div>
<div class="hl" style="left:2111.80px;top:665.18px;width:-100.60px"></div>
<div class="hl" style="left:2.00px;top:701.70px;width:113.20px"></div>
<div class="hl" style="left:118.80px;top:701.70px;width:111.90px"></div>
<div class="hl" style="left:234.30px;top:701.70px;width:80.20px"></div>
<div class="hl" style="left:318.10px;top:701.70px;width:111.90px"></div>
<div class="hl" style="left:433.60px;top:701.70px;width:80.20px"></div>
<div class="hl" style="left:517.40px;top:701.70px;width:111.90px"></div>
<div class="hl" style="left:632.90px;top:701.70px;width:80.20px"></div>
<div class="hl" style="left:716.70px;top:701.70px;width:111.90px"></div>
<div class="hl" style="left:832.20px;top:701.70px;width:80.20px"></div>
<div class="hl" style="left:916.00px;top:701.70px;width:111.90px"></div>
<div class="hl" style="left:1031.50px;top:701.70px;width:80.20px"></div>
<div class="hl" style="left:1115.30px;top:701.70px;width:111.90px"></div>
<div class="hl" style="left:1230.80px;top:701.70px;width:80.20px"></div>
<div class="hl" style="left:1314.60px;top:701.70px;width:111.90px"></div>
<div class="hl" style="left:1430.10px;top:701.70px;width:80.20px"></div>
<div class="hl" style="left:1513.90px;top:701.70px;width:111.90px"></div>
<div class="hl" style="left:1629.40px;top:701.70px;width:80.20px"></div>
<div class="hl" style="left:1713.20px;top:701.70px;width:111.90px"></div>
<div class="hl" style="left:1828.70px;top:701.70px;width:80.20px"></div>
<div class="hl" style="left:1912.50px;top:701.70px;width:111.90px"></div>
<div class="hl" style="left:2028.00px;top:701.70px;width:80.20px"></div>
<div class="hl" style="left:2111.80px;top:701.70px;width:-100.60px"></div>
<div class="hl" style="left:2.00px;top:738.22px;width:113.20px"></div>
<div class="hl" style="left:118.80px;top:738.22px;width:111.90px"></div>
<div class="hl" style="left:234.30px;top:738.22px;width:80.20px"></div>
<div class="hl" style="left:318.10px;top:738.22px;width:111.90px"></div>
<div class="hl" style="left:433.60px;top:738.22px;width:80.20px"></div>
<div class="hl" style="left:517.40px;top:738.22px;width:111.90px"></div>
<div class="hl" style="left:632.90px;top:738.22px;width:80.20px"></div>
<div class="hl" style="left:716.70px;top:738.22px;width:111.90px"></div>
<div class="hl" style="left:832.20px;top:738.22px;width:80.20px"></div>
<div class="hl" style="left:916.00px;top:738.22px;width:111.90px"></div>
<div class="hl" style="left:1031.50px;top:738.22px;width:80.20px"></div>
<div class="hl" style="left:1115.30px;top:738.22px;width:111.90px"></div>
<div class="hl" style="left:1230.80px;top:738.22px;width:80.20px"></div>
<div class="hl" style="left:1314.60px;top:738.22px;width:111.90px"></div>
<div class="hl" style="left:1430.10px;top:738.22px;width:80.20px"></div>
<div class="hl" style="left:1513.90px;top:738.22px;width:111.90px"></div>
<div class="hl" style="left:1629.40px;top:738.22px;width:80.20px"></div>
<div class="hl" style="left:1713.20px;top:738.22px;width:111.90px"></div>
<div class="hl" style="left:1828.70px;top:738.22px;width:80.20px"></div>
<div class="hl" style="left:1912.50px;top:738.22px;width:111.90px"></div>
<div class="hl" style="left:2028.00px;top:738.22px;width:80.20px"></div>
<div class="hl" style="left:2111.80px;top:738.22px;width:-100.60px"></div>
<div class="hl" style="left:2.00px;top:774.74px;width:113.20px"></div>
<div class="hl" style="left:118.80px;top:774.74px;width:111.90px"></div>
<div class="hl" style="left:234.30px;top:774.74px;width:80.20px"></div>
<div class="hl" style="left:318.10px;top:774.74px;width:111.90px"></div>
<div class="hl" style="left:433.60px;top:774.74px;width:80.20px"></div>
<div class="hl" style="left:517.40px;top:774.74px;width:111.90px"></div>
<div class="hl" style="left:632.90px;top:774.74px;width:80.20px"></div>
<div class="hl" style="left:716.70px;top:774.74px;width:111.90px"></div>
<div class="hl" style="left:832.20px;top:774.74px;width:80.20px"></div>
<div class="hl" style="left:916.00px;top:774.74px;width:111.90px"></div>
<div class="hl" style="left:1031.50px;top:774.74px;width:80.20px"></div>
<div class="hl" style="left:1115.30px;top:774.74px;width:111.90px"></div>
<div class="hl" style="left:1230.80px;top:774.74px;width:80.20px"></div>
<div class="hl" style="left:1314.60px;top:774.74px;width:111.90px"></div>
<div class="hl" style="left:1430.10px;top:774.74px;width:80.20px"></div>
<div class="hl" style="left:1513.90px;top:774.74px;width:111.90px"></div>
<div class="hl" style="left:1629.40px;top:774.74px;width:80.20px"></div>
<div class="hl" style="left:1713.20px;top:774.74px;width:111.90px"></div>
<div class="hl" style="left:1828.70px;top:774.74px;width:80.20px"></div>
<div class="hl" style="left:1912.50px;top:774.74px;width:111.90px"></div>
<div class="hl" style="left:2028.00px;top:774.74px;width:80.20px"></div>
<div class="hl" style="left:2111.80px;top:774.74px;width:-100.60px"></div>
<div class="hl" style="left:2.00px;top:811.26px;width:113.20px"></div>
<div class="hl" style="left:118.80px;top:811.26px;width:111.90px"></div>
<div class="hl" style="left:234.30px;top:811.26px;width:80.20px"></div>
<div class="hl" style="left:318.10px;top:811.26px;width:111.90px"></div>
<div class="hl" style="left:433.60px;top:811.26px;width:80.20px"></div>
<div class="hl" style="left:517.40px;top:811.26px;width:111.90px"></div>
<div class="hl" style="left:632.90px;top:811.26px;width:80.20px"></div>
<div class="hl" style="left:716.70px;top:811.26px;width:111.90px"></div>
<div class="hl" style="left:832.20px;top:811.26px;width:80.20px"></div>
<div class="hl" style="left:916.00px;top:811.26px;width:111.90px"></div>
<div class="hl" style="left:1031.50px;top:811.26px;width:80.20px"></div>
<div class="hl" style="left:1115.30px;top:811.26px;width:111.90px"></div>
<div class="hl" style="left:1230.80px;top:811.26px;width:80.20px"></div>
<div class="hl" style="left:1314.60px;top:811.26px;width:111.90px"></div>
<div class="hl" style="left:1430.10px;top:811.26px;width:80.20px"></div>
<div class="hl" style="left:1513.90px;top:811.26px;width:111.90px"></div>
<div class="hl" style="left:1629.40px;top:811.26px;width:80.20px"></div>
<div class="hl" style="left:1713.20px;top:811.26px;width:111.90px"></div>
<div class="hl" style="left:1828.70px;top:811.26px;width:80.20px"></div>
<div class="hl" style="left:1912.50px;top:811.26px;width:111.90px"></div>
<div class="hl" style="left:2028.00px;top:811.26px;width:80.20px"></div>
<div class="hl" style="left:2111.80px;top:811.26px;width:-100.60px"></div>
<div class="hl" style="left:2.00px;top:847.78px;width:113.20px"></div>
<div class="hl" style="left:118.80px;top:847.78px;width:111.90px"></div>
<div class="hl" style="left:234.30px;top:847.78px;width:80.20px"></div>
<div class="hl" style="left:318.10px;top:847.78px;width:111.90px"></div>
<div class="hl" style="left:433.60px;top:847.78px;width:80.20px"></div>
<div class="hl" style="left:517.40px;top:847.78px;width:111.90px"></div>
<div class="hl" style="left:632.90px;top:847.78px;width:80.20px"></div>
<div class="hl" style="left:716.70px;top:847.78px;width:111.90px"></div>
<div class="hl" style="left:832.20px;top:847.78px;width:80.20px"></div>
<div class="hl" style="left:916.00px;top:847.78px;width:111.90px"></div>
<div class="hl" style="left:1031.50px;top:847.78px;width:80.20px"></div>
<div class="hl" style="left:1115.30px;top:847.78px;width:111.90px"></div>
<div class="hl" style="left:1230.80px;top:847.78px;width:80.20px"></div>
<div class="hl" style="left:1314.60px;top:847.78px;width:111.90px"></div>
<div class="hl" style="left:1430.10px;top:847.78px;width:80.20px"></div>
<div class="hl" style="left:1513.90px;top:847.78px;width:111.90px"></div>
<div class="hl" style="left:1629.40px;top:847.78px;width:80.20px"></div>
<div class="hl" style="left:1713.20px;top:847.78px;width:111.90px"></div>
<div class="hl" style="left:1828.70px;top:847.78px;width:80.20px"></div>
<div class="hl" style="left:1912.50px;top:847.78px;width:111.90px"></div>
<div class="hl" style="left:2028.00px;top:847.78px;width:80.20px"></div>
<div class="hl" style="left:2111.80px;top:847.78px;width:-100.60px"></div>
<div class="vl" style="left:115.00px;top:118.50px;height:731.28px"></div>
<div class="vl" style="left:230.50px;top:118.50px;height:731.28px"></div>
<div class="vl" style="left:314.30px;top:118.50px;height:731.28px"></div>
<div class="vl" style="left:429.80px;top:118.50px;height:731.28px"></div>
<div class="vl" style="left:513.60px;top:118.50px;height:731.28px"></div>
<div class="vl" style="left:629.10px;top:118.50px;height:731.28px"></div>
<div class="vl" style="left:712.90px;top:118.50px;height:731.28px"></div>
<div class="vl" style="left:828.40px;top:118.50px;height:731.28px"></div>
<div class="vl" style="left:912.20px;top:118.50px;height:731.28px"></div>
<div class="vl" style="left:1027.70px;top:118.50px;height:731.28px"></div>
<div class="vl" style="left:1111.50px;top:118.50px;height:731.28px"></div>
<div class="vl" style="left:1227.00px;top:118.50px;height:731.28px"></div>
<div class="vl" style="left:1310.80px;top:118.50px;height:731.28px"></div>
<div class="vl" style="left:1426.30px;top:118.50px;height:731.28px"></div>
<div class="vl" style="left:1510.10px;top:118.50px;height:731.28px"></div>
<div class="vl" style="left:1625.60px;top:118.50px;height:731.28px"></div>
<div class="vl" style="left:1709.40px;top:118.50px;height:731.28px"></div>
<div class="vl" style="left:1824.90px;top:118.50px;height:731.28px"></div>
<div class="vl" style="left:1908.70px;top:118.50px;height:731.28px"></div>
<div class="vl" style="left:2024.20px;top:118.50px;height:731.28px"></div>
<div class="vl" style="left:2108.00px;top:118.50px;height:731.28px"></div>
<div class="bt" style="left:-89.00px;top:127.41px">AV800142AS</div>
<div class="bt" style="left:26.50px;top:127.41px">0.00</div>
<div class="bt" style="left:110.30px;top:127.41px">1</div>
<div class="bt" style="left:225.80px;top:127.41px">0.00</div>
<div class="bt" style="left:309.60px;top:127.41px">0</div>
<div class="bt" style="left:425.10px;top:127.41px">0.00</div>
<div class="bt" style="left:508.90px;top:127.41px">0</div>
<div class="bt" style="left:624.40px;top:127.41px">0.00</div>
<div class="bt" style="left:708.20px;top:127.41px">1</div>
<div class="bt" style="left:823.70px;top:127.41px">0.00</div>
<div class="bt" style="left:907.50px;top:127.41px">0</div>
<div class="bt" style="left:1023.00px;top:127.41px">0.00</div>
<div class="bt" style="left:1106.80px;top:127.41px">0</div>
<div class="bt" style="left:1222.30px;top:127.41px">0.00</div>
<div class="bt" style="left:1306.10px;top:127.41px">0</div>
<div class="bt" style="left:1421.60px;top:127.41px">0.00</div>
<div class="bt" style="left:1505.40px;top:127.41px">0</div>
<div class="bt" style="left:1620.90px;top:127.41px">0.00</div>
<div class="bt" style="left:1704.70px;top:127.41px">0</div>
<div class="bt" style="left:-89.00px;top:164.37px">AV800143AS</div>
<div class="bt" style="left:26.50px;top:164.37px">0.00</div>
<div class="bt" style="left:110.30px;top:164.37px">1</div>
<div class="bt" style="left:225.80px;top:164.37px">0.00</div>
<div class="bt" style="left:309.60px;top:164.37px">0</div>
<div class="bt" style="left:425.10px;top:164.37px">0.00</div>
<div class="bt" style="left:508.90px;top:164.37px">0</div>
<div class="bt" style="left:624.40px;top:164.37px">0.00</div>
<div class="bt" style="left:708.20px;top:164.37px">1</div>
<div class="bt" style="left:823.70px;top:164.37px">0.00</div>
<div class="bt" style="left:907.50px;top:164.37px">0</div>
<div class="bt" style="left:1023.00px;top:164.37px">0.00</div>
<div class="bt" style="left:1106.80px;top:164.37px">0</div>
<div class="bt" style="left:1222.30px;top:164.37px">0.00</div>
<div class="bt" style="left:1306.10px;top:164.37px">0</div>
<div class="bt" style="left:1421.60px;top:164.37px">0.00</div>
<div class="bt" style="left:1505.40px;top:164.37px">0</div>
<div class="bt" style="left:1620.90px;top:164.37px">0.00</div>
<div class="bt" style="left:1704.70px;top:164.37px">0</div>
<div class="bt" style="left:-89.00px;top:200.89px">AV800144AS</div>
<div class="bt" style="left:26.50px;top:200.89px">0.00</div>
<div class="bt" style="left:110.30px;top:200.89px">1</div>
<div class="bt" style="left:225.80px;top:200.89px">0.00</div>
<div class="bt" style="left:309.60px;top:200.89px">0</div>
<div class="bt" style="left:425.10px;top:200.89px">0.00</div>
<div class="bt" style="left:508.90px;top:200.89px">0</div>
<div class="bt" style="left:624.40px;top:200.89px">0.00</div>
<div class="bt" style="left:708.20px;top:200.89px">1</div>
<div class="bt" style="left:823.70px;top:200.89px">0.00</div>
<div class="bt" style="left:907.50px;top:200.89px">0</div>
<div class="bt" style="left:1023.00px;top:200.89px">0.00</div>
<div class="bt" style="left:1106.80px;top:200.89px">0</div>
<div class="bt" style="left:1222.30px;top:200.89px">0.00</div>
<div class="bt" style="left:1306.10px;top:200.89px">0</div>
<div class="bt" style="left:1421.60px;top:200.89px">0.00</div>
<div class="bt" style="left:1505.40px;top:200.89px">0</div>
<div class="bt" style="left:1620.90px;top:200.89px">0.00</div>
<div class="bt" style="left:1704.70px;top:200.89px">0</div>
<div class="bt" style="left:-89.00px;top:237.41px">AV800145AS</div>
<div class="bt" style="left:26.50px;top:237.41px">0.00</div>
<div class="bt" style="left:110.30px;top:237.41px">1</div>
<div class="bt" style="left:225.80px;top:237.41px">0.00</div>
<div class="bt" style="left:309.60px;top:237.41px">0</div>
<div class="bt" style="left:425.10px;top:237.41px">0.00</div>
<div class="bt" style="left:508.90px;top:237.41px">0</div>
<div class="bt" style="left:624.40px;top:237.41px">0.00</div>
<div class="bt" style="left:708.20px;top:237.41px">1</div>
<div class="bt" style="left:823.70px;top:237.41px">0.00</div>
<div class="bt" style="left:907.50px;top:237.41px">0</div>
<div class="bt" style="left:1023.00px;top:237.41px">0.00</div>
<div class="bt" style="left:1106.80px;top:237.41px">0</div>
<div class="bt" style="left:1222.30px;top:237.41px">0.00</div>
<div class="bt" style="left:1306.10px;top:237.41px">0</div>
<div class="bt" style="left:1421.60px;top:237.41px">0.00</div>
<div class="bt" style="left:1505.40px;top:237.41px">0</div>
<div class="bt" style="left:1620.90px;top:237.41px">0.00</div>
<div class="bt" style="left:1704.70px;top:237.41px">0</div>
<div class="bt" style="left:-89.00px;top:273.93px">AV800146AS</div>
<div class="bt" style="left:26.50px;top:273.93px">0.00</div>
<div class="bt" style="left:110.30px;top:273.93px">1</div>
<div class="bt" style="left:225.80px;top:273.93px">0.00</div>
<div class="bt" style="left:309.60px;top:273.93px">0</div>
<div class="bt" style="left:425.10px;top:273.93px">0.00</div>
<div class="bt" style="left:508.90px;top:273.93px">0</div>
<div class="bt" style="left:624.40px;top:273.93px">0.00</div>
<div class="bt" style="left:708.20px;top:273.93px">1</div>
<div class="bt" style="left:823.70px;top:273.93px">0.00</div>
<div class="bt" style="left:907.50px;top:273.93px">0</div>
<div class="bt" style="left:1023.00px;top:273.93px">0.00</div>
<div class="bt" style="left:1106.80px;top:273.93px">0</div>
<div class="bt" style="left:1222.30px;top:273.93px">0.00</div>
<div class="bt" style="left:1306.10px;top:273.93px">0</div>
<div class="bt" style="left:1421.60px;top:273.93px">0.00</div>
<div class="bt" style="left:1505.40px;top:273.93px">0</div>
<div class="bt" style="left:1620.90px;top:273.93px">0.00</div>
<div class="bt" style="left:1704.70px;top:273.93px">0</div>
<div class="bt" style="left:-89.00px;top:310.45px">BB10000000</div>
<div class="bt" style="left:26.50px;top:310.45px">500.00</div>
<div class="bt" style="left:110.30px;top:310.45px">1</div>
<div class="bt" style="left:225.80px;top:310.45px">0.00</div>
<div class="bt" style="left:309.60px;top:310.45px">0</div>
<div class="bt" style="left:425.10px;top:310.45px">0.00</div>
<div class="bt" style="left:508.90px;top:310.45px">0</div>
<div class="bt" style="left:624.40px;top:310.45px">0.00</div>
<div class="bt" style="left:708.20px;top:310.45px">0</div>
<div class="bt" style="left:823.70px;top:310.45px">0.00</div>
<div class="bt" style="left:907.50px;top:310.45px">0</div>
<div class="bt" style="left:1023.00px;top:310.45px">0.00</div>
<div class="bt" style="left:1106.80px;top:310.45px">0</div>
<div class="bt" style="left:1222.30px;top:310.45px">0.00</div>
<div class="bt" style="left:1306.10px;top:310.45px">0</div>
<div class="bt" style="left:1421.60px;top:310.45px">0.00</div>
<div class="bt" style="left:1505.40px;top:310.45px">0</div>
<div class="bt" style="left:1620.90px;top:310.45px">0.00</div>
<div class="bt" style="left:1704.70px;top:310.45px">0</div>
<div class="bt" style="left:-89.00px;top:346.97px">BB10000001</div>
<div class="bt" style="left:26.50px;top:346.97px">500.00</div>
<div class="bt" style="left:110.30px;top:346.97px">1</div>
<div class="bt" style="left:225.80px;top:346.97px">0.00</div>
<div class="bt" style="left:309.60px;top:346.97px">0</div>
<div class="bt" style="left:425.10px;top:346.97px">0.00</div>
<div class="bt" style="left:508.90px;top:346.97px">0</div>
<div class="bt" style="left:624.40px;top:346.97px">0.00</div>
<div class="bt" style="left:708.20px;top:346.97px">0</div>
<div class="bt" style="left:823.70px;top:346.97px">0.00</div>
<div class="bt" style="left:907.50px;top:346.97px">0</div>
<div class="bt" style="left:1023.00px;top:346.97px">0.00</div>
<div class="bt" style="left:1106.80px;top:346.97px">0</div>
<div class="bt" style="left:1222.30px;top:346.97px">0.00</div>
<div class="bt" style="left:1306.10px;top:346.97px">0</div>
<div class="bt" style="left:1421.60px;top:346.97px">0.00</div>
<div class="bt" style="left:1505.40px;top:346.97px">0</div>
<div class="bt" style="left:1620.90px;top:346.97px">0.00</div>
<div class="bt" style="left:1704.70px;top:346.97px">0</div>
<div class="bt" style="left:-89.00px;top:383.49px">BB10000002</div>
<div class="bt" style="left:26.50px;top:383.49px">500.00</div>
<div class="bt" style="left:110.30px;top:383.49px">1</div>
<div class="bt" style="left:225.80px;top:383.49px">0.00</div>
<div class="bt" style="left:309.60px;top:383.49px">0</div>
<div class="bt" style="left:425.10px;top:383.49px">0.00</div>
<div class="bt" style="left:508.90px;top:383.49px">0</div>
<div class="bt" style="left:624.40px;top:383.49px">0.00</div>
<div class="bt" style="left:708.20px;top:383.49px">0</div>
<div class="bt" style="left:823.70px;top:383.49px">0.00</div>
<div class="bt" style="left:907.50px;top:383.49px">0</div>
<div class="bt" style="left:1023.00px;top:383.49px">0.00</div>
<div class="bt" style="left:1106.80px;top:383.49px">0</div>
<div class="bt" style="left:1222.30px;top:383.49px">0.00</div>
<div class="bt" style="left:1306.10px;top:383.49px">0</div>
<div class="bt" style="left:1421.60px;top:383.49px">0.00</div>
<div class="bt" style="left:1505.40px;top:383.49px">0</div>
<div class="bt" style="left:1620.90px;top:383.49px">0.00</div>
<div class="bt" style="left:1704.70px;top:383.49px">0</div>
<div class="bt" style="left:-89.00px;top:420.01px">BB10000003</div>
<div class="bt" style="left:26.50px;top:420.01px">500.00</div>
<div class="bt" style="left:110.30px;top:420.01px">1</div>
<div class="bt" style="left:225.80px;top:420.01px">0.00</div>
<div class="bt" style="left:309.60px;top:420.01px">0</div>
<div class="bt" style="left:425.10px;top:420.01px">0.00</div>
<div class="bt" style="left:508.90px;top:420.01px">0</div>
<div class="bt" style="left:624.40px;top:420.01px">0.00</div>
<div class="bt" style="left:708.20px;top:420.01px">0</div>
<div class="bt" style="left:823.70px;top:420.01px">0.00</div>
<div class="bt" style="left:907.50px;top:420.01px">0</div>
<div class="bt" style="left:1023.00px;top:420.01px">0.00</div>
<div class="bt" style="left:1106.80px;top:420.01px">0</div>
<div class="bt" style="left:1222.30px;top:420.01px">0.00</div>
<div class="bt" style="left:1306.10px;top:420.01px">0</div>
<div class="bt" style="left:1421.60px;top:420.01px">0.00</div>
<div class="bt" style="left:1505.40px;top:420.01px">0</div>
<div class="bt" style="left:1620.90px;top:420.01px">0.00</div>
<div class="bt" style="left:1704.70px;top:420.01px">0</div>
<div class="bt" style="left:-89.00px;top:456.53px">BB40000001</div>
<div class="bt" style="left:26.50px;top:456.53px">500.00</div>
<div class="bt" style="left:110.30px;top:456.53px">1</div>
<div class="bt" style="left:225.80px;top:456.53px">0.00</div>
<div class="bt" style="left:309.60px;top:456.53px">0</div>
<div class="bt" style="left:425.10px;top:456.53px">0.00</div>
<div class="bt" style="left:508.90px;top:456.53px">0</div>
<div class="bt" style="left:624.40px;top:456.53px">0.00</div>
<div class="bt" style="left:708.20px;top:456.53px">0</div>
<div class="bt" style="left:823.70px;top:456.53px">0.00</div>
<div class="bt" style="left:907.50px;top:456.53px">0</div>
<div class="bt" style="left:1023.00px;top:456.53px">0.00</div>
<div class="bt" style="left:1106.80px;top:456.53px">0</div>
<div class="bt" style="left:1222.30px;top:456.53px">0.00</div>
<div class="bt" style="left:1306.10px;top:456.53px">0</div>
<div class="bt" style="left:1421.60px;top:456.53px">0.00</div>
<div class="bt" style="left:1505.40px;top:456.53px">0</div>
<div class="bt" style="left:1620.90px;top:456.53px">0.00</div>
<div class="bt" style="left:1704.70px;top:456.53px">0</div>
<div class="bt" style="left:-89.00px;top:493.05px">BB40000002</div>
<div class="bt" style="left:26.50px;top:493.05px">500.00</div>
<div class="bt" style="left:110.30px;top:493.05px">1</div>
<div class="bt" style="left:225.80px;top:493.05px">0.00</div>
<div class="bt" style="left:309.60px;top:493.05px">0</div>
<div class="bt" style="left:425.10px;top:493.05px">0.00</div>
<div class="bt" style="left:508.90px;top:493.05px">0</div>
<div class="bt" style="left:624.40px;top:493.05px">0.00</div>
<div class="bt" style="left:708.20px;top:493.05px">0</div>
<div class="bt" style="left:823.70px;top:493.05px">0.00</div>
<div class="bt" style="left:907.50px;top:493.05px">0</div>
<div class="bt" style="left:1023.00px;top:493.05px">10.00</div>
<div class="bt" style="left:1106.80px;top:493.05px">1</div>
<div class="bt" style="left:1222.30px;top:493.05px">0.00</div>
<div class="bt" style="left:1306.10px;top:493.05px">0</div>
<div class="bt" style="left:1421.60px;top:493.05px">0.00</div>
<div class="bt" style="left:1505.40px;top:493.05px">0</div>
<div class="bt" style="left:1620.90px;top:493.05px">0.00</div>
<div class="bt" style="left:1704.70px;top:493.05px">0</div>
<div class="bt" style="left:-89.00px;top:529.57px">BB40000003</div>
<div class="bt" style="left:26.50px;top:529.57px">500.00</div>
<div class="bt" style="left:110.30px;top:529.57px">1</div>
<div class="bt" style="left:225.80px;top:529.57px">0.00</div>
<div class="bt" style="left:309.60px;top:529.57px">0</div>
<div class="bt" style="left:425.10px;top:529.57px">0.00</div>
<div class="bt" style="left:508.90px;top:529.57px">0</div>
<div class="bt" style="left:624.40px;top:529.57px">0.00</div>
<div class="bt" style="left:708.20px;top:529.57px">0</div>
<div class="bt" style="left:823.70px;top:529.57px">0.00</div>
<div class="bt" style="left:907.50px;top:529.57px">0</div>
<div class="bt" style="left:1023.00px;top:529.57px">0.00</div>
<div class="bt" style="left:1106.80px;top:529.57px">0</div>
<div class="bt" style="left:1222.30px;top:529.57px">0.00</div>
<div class="bt" style="left:1306.10px;top:529.57px">0</div>
<div class="bt" style="left:1421.60px;top:529.57px">0.00</div>
<div class="bt" style="left:1505.40px;top:529.57px">0</div>
<div class="bt" style="left:1620.90px;top:529.57px">0.00</div>
<div class="bt" style="left:1704.70px;top:529.57px">0</div>
<div class="bt" style="left:-89.00px;top:566.09px">BB40000004</div>
<div class="bt" style="left:26.50px;top:566.09px">500.00</div>
<div class="bt" style="left:110.30px;top:566.09px">1</div>
<div class="bt" style="left:225.80px;top:566.09px">0.00</div>
<div class="bt" style="left:309.60px;top:566.09px">0</div>
<div class="bt" style="left:425.10px;top:566.09px">0.00</div>
<div class="bt" style="left:508.90px;top:566.09px">0</div>
<div class="bt" style="left:624.40px;top:566.09px">0.00</div>
<div class="bt" style="left:708.20px;top:566.09px">0</div>
<div class="bt" style="left:823.70px;top:566.09px">0.00</div>
<div class="bt" style="left:907.50px;top:566.09px">0</div>
<div class="bt" style="left:1023.00px;top:566.09px">0.00</div>
<div class="bt" style="left:1106.80px;top:566.09px">0</div>
<div class="bt" style="left:1222.30px;top:566.09px">0.00</div>
<div class="bt" style="left:1306.10px;top:566.09px">0</div>
<div class="bt" style="left:1421.60px;top:566.09px">0.00</div>
<div class="bt" style="left:1505.40px;top:566.09px">0</div>
<div class="bt" style="left:1620.90px;top:566.09px">0.00</div>
<div class="bt" style="left:1704.70px;top:566.09px">0</div>
<div class="bt" style="left:-89.00px;top:602.61px">BB40000005</div>
<div class="bt" style="left:26.50px;top:602.61px">500.00</div>
<div class="bt" style="left:110.30px;top:602.61px">1</div>
<div class="bt" style="left:225.80px;top:602.61px">0.00</div>
<div class="bt" style="left:309.60px;top:602.61px">0</div>
<div class="bt" style="left:425.10px;top:602.61px">0.00</div>
<div class="bt" style="left:508.90px;top:602.61px">0</div>
<div class="bt" style="left:624.40px;top:602.61px">0.00</div>
<div class="bt" style="left:708.20px;top:602.61px">0</div>
<div class="bt" style="left:823.70px;top:602.61px">0.00</div>
<div class="bt" style="left:907.50px;top:602.61px">0</div>
<div class="bt" style="left:1023.00px;top:602.61px">0.00</div>
<div class="bt" style="left:1106.80px;top:602.61px">0</div>
<div class="bt" style="left:1222.30px;top:602.61px">0.00</div>
<div class="bt" style="left:1306.10px;top:602.61px">0</div>
<div class="bt" style="left:1421.60px;top:602.61px">0.00</div>
<div class="bt" style="left:1505.40px;top:602.61px">0</div>
<div class="bt" style="left:1620.90px;top:602.61px">0.00</div>
<div class="bt" style="left:1704.70px;top:602.61px">0</div>
<div class="bt" style="left:-89.00px;top:639.13px">EN400001</div>
<div class="bt" style="left:26.50px;top:639.13px">150.00</div>
<div class="bt" style="left:110.30px;top:639.13px">1</div>
<div class="bt" style="left:225.80px;top:639.13px">0.00</div>
<div class="bt" style="left:309.60px;top:639.13px">0</div>
<div class="bt" style="left:425.10px;top:639.13px">0.00</div>
<div class="bt" style="left:508.90px;top:639.13px">0</div>
<div class="bt" style="left:624.40px;top:639.13px">0.00</div>
<div class="bt" style="left:708.20px;top:639.13px">0</div>
<div class="bt" style="left:823.70px;top:639.13px">0.00</div>
<div class="bt" style="left:907.50px;top:639.13px">0</div>
<div class="bt" style="left:1023.00px;top:639.13px">0.00</div>
<div class="bt" style="left:1106.80px;top:639.13px">0</div>
<div class="bt" style="left:1222.30px;top:639.13px">0.00</div>
<div class="bt" style="left:1306.10px;top:639.13px">0</div>
<div class="bt" style="left:1421.60px;top:639.13px">0.00</div>
<div class="bt" style="left:1505.40px;top:639.13px">0</div>
<div class="bt" style="left:1620.90px;top:639.13px">0.00</div>
<div class="bt" style="left:1704.70px;top:639.13px">0</div>
<div class="bt" style="left:-89.00px;top:675.65px">EN400002</div>
<div class="bt" style="left:26.50px;top:675.65px">150.00</div>
<div class="bt" style="left:110.30px;top:675.65px">1</div>
<div class="bt" style="left:225.80px;top:675.65px">0.00</div>
<div class="bt" style="left:309.60px;top:675.65px">0</div>
<div class="bt" style="left:425.10px;top:675.65px">0.00</div>
<div class="bt" style="left:508.90px;top:675.65px">0</div>
<div class="bt" style="left:624.40px;top:675.65px">0.00</div>
<div class="bt" style="left:708.20px;top:675.65px">0</div>
<div class="bt" style="left:823.70px;top:675.65px">0.00</div>
<div class="bt" style="left:907.50px;top:675.65px">0</div>
<div class="bt" style="left:1023.00px;top:675.65px">0.00</div>
<div class="bt" style="left:1106.80px;top:675.65px">0</div>
<div class="bt" style="left:1222.30px;top:675.65px">0.00</div>
<div class="bt" style="left:1306.10px;top:675.65px">0</div>
<div class="bt" style="left:1421.60px;top:675.65px">0.00</div>
<div class="bt" style="left:1505.40px;top:675.65px">0</div>
<div class="bt" style="left:1620.90px;top:675.65px">0.00</div>
<div class="bt" style="left:1704.70px;top:675.65px">0</div>
<div class="bt" style="left:-89.00px;top:712.17px">PC700092</div>
<div class="bt" style="left:26.50px;top:712.17px">190.00</div>
<div class="bt" style="left:110.30px;top:712.17px">1</div>
<div class="bt" style="left:225.80px;top:712.17px">0.00</div>
<div class="bt" style="left:309.60px;top:712.17px">0</div>
<div class="bt" style="left:425.10px;top:712.17px">0.00</div>
<div class="bt" style="left:508.90px;top:712.17px">0</div>
<div class="bt" style="left:624.40px;top:712.17px">0.00</div>
<div class="bt" style="left:708.20px;top:712.17px">0</div>
<div class="bt" style="left:823.70px;top:712.17px">0.00</div>
<div class="bt" style="left:907.50px;top:712.17px">0</div>
<div class="bt" style="left:1023.00px;top:712.17px">0.00</div>
<div class="bt" style="left:1106.80px;top:712.17px">0</div>
<div class="bt" style="left:1222.30px;top:712.17px">0.00</div>
<div class="bt" style="left:1306.10px;top:712.17px">0</div>
<div class="bt" style="left:1421.60px;top:712.17px">0.00</div>
<div class="bt" style="left:1505.40px;top:712.17px">0</div>
<div class="bt" style="left:1620.90px;top:712.17px">0.00</div>
<div class="bt" style="left:1704.70px;top:712.17px">0</div>
<div class="bt" style="left:-89.00px;top:748.69px">PC700093</div>
<div class="bt" style="left:26.50px;top:748.69px">190.00</div>
<div class="bt" style="left:110.30px;top:748.69px">1</div>
<div class="bt" style="left:225.80px;top:748.69px">0.00</div>
<div class="bt" style="left:309.60px;top:748.69px">0</div>
<div class="bt" style="left:425.10px;top:748.69px">0.00</div>
<div class="bt" style="left:508.90px;top:748.69px">0</div>
<div class="bt" style="left:624.40px;top:748.69px">0.00</div>
<div class="bt" style="left:708.20px;top:748.69px">0</div>
<div class="bt" style="left:823.70px;top:748.69px">0.00</div>
<div class="bt" style="left:907.50px;top:748.69px">0</div>
<div class="bt" style="left:1023.00px;top:748.69px">0.00</div>
<div class="bt" style="left:1106.80px;top:748.69px">0</div>
<div class="bt" style="left:1222.30px;top:748.69px">0.00</div>
<div class="bt" style="left:1306.10px;top:748.69px">0</div>
<div class="bt" style="left:1421.60px;top:748.69px">0.00</div>
<div class="bt" style="left:1505.40px;top:748.69px">0</div>
<div class="bt" style="left:1620.90px;top:748.69px">0.00</div>
<div class="bt" style="left:1704.70px;top:748.69px">0</div>
<div class="bt" style="left:-89.00px;top:785.21px">PC700094</div>
<div class="bt" style="left:26.50px;top:785.21px">190.00</div>
<div class="bt" style="left:110.30px;top:785.21px">1</div>
<div class="bt" style="left:225.80px;top:785.21px">0.00</div>
<div class="bt" style="left:309.60px;top:785.21px">0</div>
<div class="bt" style="left:425.10px;top:785.21px">0.00</div>
<div class="bt" style="left:508.90px;top:785.21px">0</div>
<div class="bt" style="left:624.40px;top:785.21px">0.00</div>
<div class="bt" style="left:708.20px;top:785.21px">0</div>
<div class="bt" style="left:823.70px;top:785.21px">0.00</div>
<div class="bt" style="left:907.50px;top:785.21px">0</div>
<div class="bt" style="left:1023.00px;top:785.21px">0.00</div>
<div class="bt" style="left:1106.80px;top:785.21px">0</div>
<div class="bt" style="left:1222.30px;top:785.21px">0.00</div>
<div class="bt" style="left:1306.10px;top:785.21px">0</div>
<div class="bt" style="left:1421.60px;top:785.21px">0.00</div>
<div class="bt" style="left:1505.40px;top:785.21px">0</div>
<div class="bt" style="left:1620.90px;top:785.21px">0.00</div>
<div class="bt" style="left:1704.70px;top:785.21px">0</div>
<div class="bt" style="left:-89.00px;top:821.73px">PC700095</div>
<div class="bt" style="left:26.50px;top:821.73px">190.00</div>
<div class="bt" style="left:110.30px;top:821.73px">1</div>
<div class="bt" style="left:225.80px;top:821.73px">0.00</div>
<div class="bt" style="left:309.60px;top:821.73px">0</div>
<div class="bt" style="left:425.10px;top:821.73px">0.00</div>
<div class="bt" style="left:508.90px;top:821.73px">0</div>
<div class="bt" style="left:624.40px;top:821.73px">0.00</div>
<div class="bt" style="left:708.20px;top:821.73px">0</div>
<div class="bt" style="left:823.70px;top:821.73px">0.00</div>
<div class="bt" style="left:907.50px;top:821.73px">0</div>
<div class="bt" style="left:1023.00px;top:821.73px">0.00</div>
<div class="bt" style="left:1106.80px;top:821.73px">0</div>
<div class="bt" style="left:1222.30px;top:821.73px">0.00</div>
<div class="bt" style="left:1306.10px;top:821.73px">0</div>
<div class="bt" style="left:1421.60px;top:821.73px">0.00</div>
<div class="bt" style="left:1505.40px;top:821.73px">0</div>
<div class="bt" style="left:1620.90px;top:821.73px">0.00</div>
<div class="bt" style="left:1704.70px;top:821.73px">0</div>
</div>
<div class="sbar"><div class="sthumb"></div><svg style="position:absolute;left:6px;top:7px" width="8" height="11" viewBox="0 0 8 11"><path d="M7 0.5 V10.5 L1 5.5Z" fill="#a0a0a0"/></svg><svg style="position:absolute;right:8.5px;top:6.5px" width="8" height="11" viewBox="0 0 8 11"><path d="M1 0.5 V10.5 L7 5.5Z" fill="#505050"/></svg></div>
</body>
</html>
